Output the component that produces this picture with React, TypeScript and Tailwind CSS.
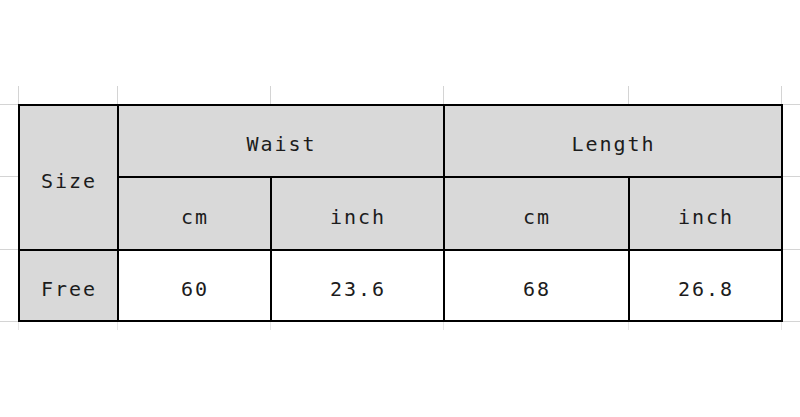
const COLS = [99, 153, 173, 185, 154]

const cell = 'flex items-center justify-center pt-[6px] pl-[2px]'
const head = `${cell} bg-[#d9d9d9]`
const body = `${cell} bg-white`

/* Faint spreadsheet gridline stubs above/below the table. */
function Ticks({ h, tone }: { h: string; tone: string }) {
  return (
    <div className={`flex pl-[18px] ${h}`}>
      {COLS.map((w, i) => (
        <div
          key={i}
          style={{ width: w }}
          className={`border-l ${tone} ${i === COLS.length - 1 ? 'border-r' : ''}`}
        />
      ))}
    </div>
  )
}

/* Horizontal gridline stubs at the table's row lines. */
function Margin() {
  return (
    <div className="flex w-[18px] flex-col">
      <div className="h-[72px] border-t border-[#d4d4d4]" />
      <div className="h-[73px] border-t border-[#d4d4d4]" />
      <div className="h-[73px] border-y border-[#d4d4d4]" />
    </div>
  )
}

export default function App() {
  return (
    <div
      className="h-[417px] w-[800px] overflow-hidden bg-white pt-[86px] text-[20px] tracking-[2px] text-[#1c1c1c]"
      style={{ fontFamily: '"DejaVu Sans Mono", "Liberation Mono", monospace' }}
    >
      <Ticks h="h-[18px]" tone="border-[#d4d4d4]" />
      <div className="flex">
        <Margin />
        <div className="grid grid-cols-[97px_151px_171px_183px_151px] grid-rows-[70px_71px_69px] gap-[2px] bg-black p-[2px]">
          <div className={`${head} row-span-2`}>Size</div>
          <div className={`${head} col-span-2`}>Waist</div>
          <div className={`${head} col-span-2`}>Length</div>
          <div className={head}>cm</div>
          <div className={head}>inch</div>
          <div className={head}>cm</div>
          <div className={head}>inch</div>
          <div className={head}>Free</div>
          <div className={body}>60</div>
          <div className={body}>23.6</div>
          <div className={body}>68</div>
          <div className={body}>26.8</div>
        </div>
        <Margin />
      </div>
      <Ticks h="h-[8px]" tone="border-[#e6e6e6]" />
    </div>
  )
}
